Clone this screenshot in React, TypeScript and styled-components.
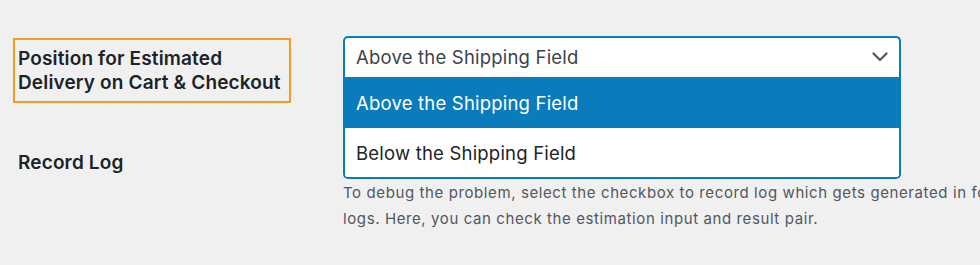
import React from "react";
import styled, { createGlobalStyle } from "styled-components";

const Global = createGlobalStyle`
  html, body { margin: 0; padding: 0; background: #f0f0f1; }
  body { font-family: Inter, "Noto Sans", "Liberation Sans", sans-serif; color: #1d2327; }
  * { box-sizing: border-box; }
`;

const Page = styled.div`
  width: 980px;
  height: 265px;
  overflow: hidden;
  padding: 36px 0 0 13px;
`;

const FormTable = styled.div`
  display: grid;
  grid-template-columns: 330px 1fr;
  row-gap: 0;
`;

const LabelCell = styled.div<{ $top?: number; $left?: number }>`
  padding-top: ${(p) => p.$top ?? 0}px;
  padding-left: ${(p) => p.$left ?? 0}px;
`;

const HighlightBox = styled.div`
  display: inline-block;
  border: 2px solid #f39c1f;
  padding: 7px 8px 6px 3px;
  margin-top: 2px;
`;

const Label = styled.div`
  font-size: 19px;
  font-weight: 600;
  line-height: 24px;
  letter-spacing: 0.15px;
  color: #1d2327;
  white-space: nowrap;
`;

const FieldCell = styled.div<{ $top?: number }>`
  position: relative;
  padding-top: ${(p) => p.$top ?? 0}px;
  white-space: nowrap;
`;

const SelectWrap = styled.div`
  position: relative;
  width: 558px;
`;

const SelectBox = styled.div`
  height: 42px;
  border: 2px solid #0a7cbb;
  border-bottom: none;
  border-radius: 5px 5px 0 0;
  background: #fff;
  display: flex;
  align-items: center;
  justify-content: space-between;
  padding: 0 11px 2px 11px;
  font-size: 18.5px;
  letter-spacing: 0.2px;
  color: #3c434a;
  box-shadow: inset 0 -1px 0 #dbe6ee;
`;

const Menu = styled.div`
  position: absolute;
  left: 0;
  right: 0;
  top: 41px;
  background: #fff;
  border: 2px solid #0a7cbb;
  border-top: none;
  border-radius: 0 0 5px 5px;
  overflow: hidden;
  z-index: 2;
`;

const Option = styled.div<{ $active?: boolean }>`
  height: ${(p) => (p.$active ? 51 : 49)}px;
  display: flex;
  align-items: center;
  padding: 0 11px;
  font-size: 18.5px;
  letter-spacing: 0.2px;
  background: ${(p) => (p.$active ? "#0a7cbb" : "#fff")};
  color: ${(p) => (p.$active ? "#fff" : "#1d2327")};
`;

const Checkbox = styled.input`
  display: block;
  margin: 0;
  width: 20px;
  height: 20px;
`;

const Description = styled.p`
  margin: 9px 0 0 0;
  font-size: 15px;
  line-height: 26px;
  letter-spacing: 0.6px;
  color: #50575e;
`;

const Chevron = () => (
  <svg width="16" height="10" viewBox="0 0 16 10" fill="none">
    <path d="M1.5 1.5 L8 8 L14.5 1.5" stroke="#50575e" strokeWidth="2.2" strokeLinecap="round" strokeLinejoin="round" />
  </svg>
);

export default function App() {
  return (
    <Page>
      <Global />
      <FormTable>
        <LabelCell>
          <HighlightBox>
            <Label>Position for Estimated</Label>
            <Label>Delivery on Cart &amp; Checkout</Label>
          </HighlightBox>
        </LabelCell>
        <FieldCell>
          <SelectWrap>
            <SelectBox>
              <span>Above the Shipping Field</span>
              <Chevron />
            </SelectBox>
            <Menu>
              <Option $active>Above the Shipping Field</Option>
              <Option>Below the Shipping Field</Option>
            </Menu>
          </SelectWrap>
        </FieldCell>
        <LabelCell $top={48} $left={5}>
          <Label>Record Log</Label>
        </LabelCell>
        <FieldCell $top={48}>
          <Checkbox type="checkbox" />
          <Description>
            To debug the problem, select the checkbox to record log which gets generated in folder of the
            <br />
            logs. Here, you can check the estimation input and result pair.
          </Description>
        </FieldCell>
      </FormTable>
    </Page>
  );
}
